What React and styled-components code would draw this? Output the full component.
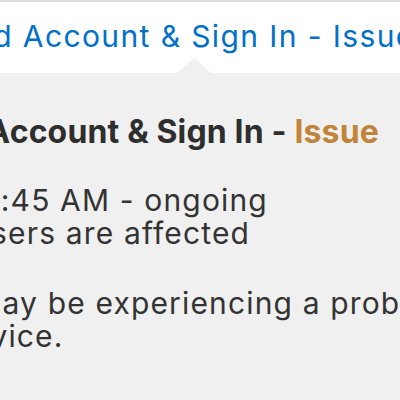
import React from "react";
import styled, { createGlobalStyle } from "styled-components";

const GlobalStyle = createGlobalStyle`
  html, body {
    margin: 0;
    padding: 0;
    background: #ffffff;
  }
  body {
    width: 400px;
    height: 400px;
    overflow: hidden;
    font-family: Inter, "Liberation Sans", Arial, sans-serif;
    -webkit-font-smoothing: antialiased;
  }
`;

const Page = styled.div`
  width: 400px;
  height: 400px;
  overflow: hidden;
  display: flex;
  flex-direction: column;
  border-top: 2px solid #dcdcdc;
  box-sizing: border-box;
`;

const ServiceRow = styled.div`
  position: relative;
  height: 71px;
  flex: none;
  padding-top: 16px;
  box-sizing: border-box;
  white-space: nowrap;
`;

const ServiceLink = styled.a`
  display: block;
  margin-left: -86px;
  font-size: 30px;
  line-height: 36px;
  letter-spacing: 1.4px;
  color: #0070c9;
  text-decoration: none;
`;

const Arrow = styled.div`
  position: absolute;
  left: 177px;
  bottom: 0;
  width: 0;
  height: 0;
  border-left: 17px solid transparent;
  border-right: 17px solid transparent;
  border-bottom: 15px solid #f0f0f0;
`;

const Popover = styled.div`
  flex: 1;
  background: #f0f0f0;
  padding-top: 39px;
  white-space: nowrap;
`;

const Content = styled.div`
  margin-left: -123px;
  display: flex;
  flex-direction: column;
`;

const Title = styled.div`
  font-size: 32px;
  font-weight: 700;
  line-height: 39px;
  letter-spacing: 0.15px;
  color: #2e2e2e;
  margin-bottom: 33px;
`;

const Status = styled.span`
  color: #c0853a;
`;

const Para = styled.p`
  margin: 0 0 ${(p) => p.gap || 0}px;
  font-size: 30px;
  line-height: 33px;
  letter-spacing: 1.15px;
  color: #333333;
`;

export default function App() {
  return (
    <>
      <GlobalStyle />
      <Page>
        <ServiceRow>
          <ServiceLink href="#">iCloud Account &amp; Sign In - Issue</ServiceLink>
          <Arrow />
        </ServiceRow>
        <Popover>
          <Content>
            <Title>
              iCloud Account &amp; Sign In - <Status>Issue</Status>
            </Title>
            <Para>Today, 1:45 AM - ongoing</Para>
            <Para gap={37}>Some users are affected</Para>
            <Para>
              Users may be experiencing a problem with
              <br />
              this service.
            </Para>
          </Content>
        </Popover>
      </Page>
    </>
  );
}
